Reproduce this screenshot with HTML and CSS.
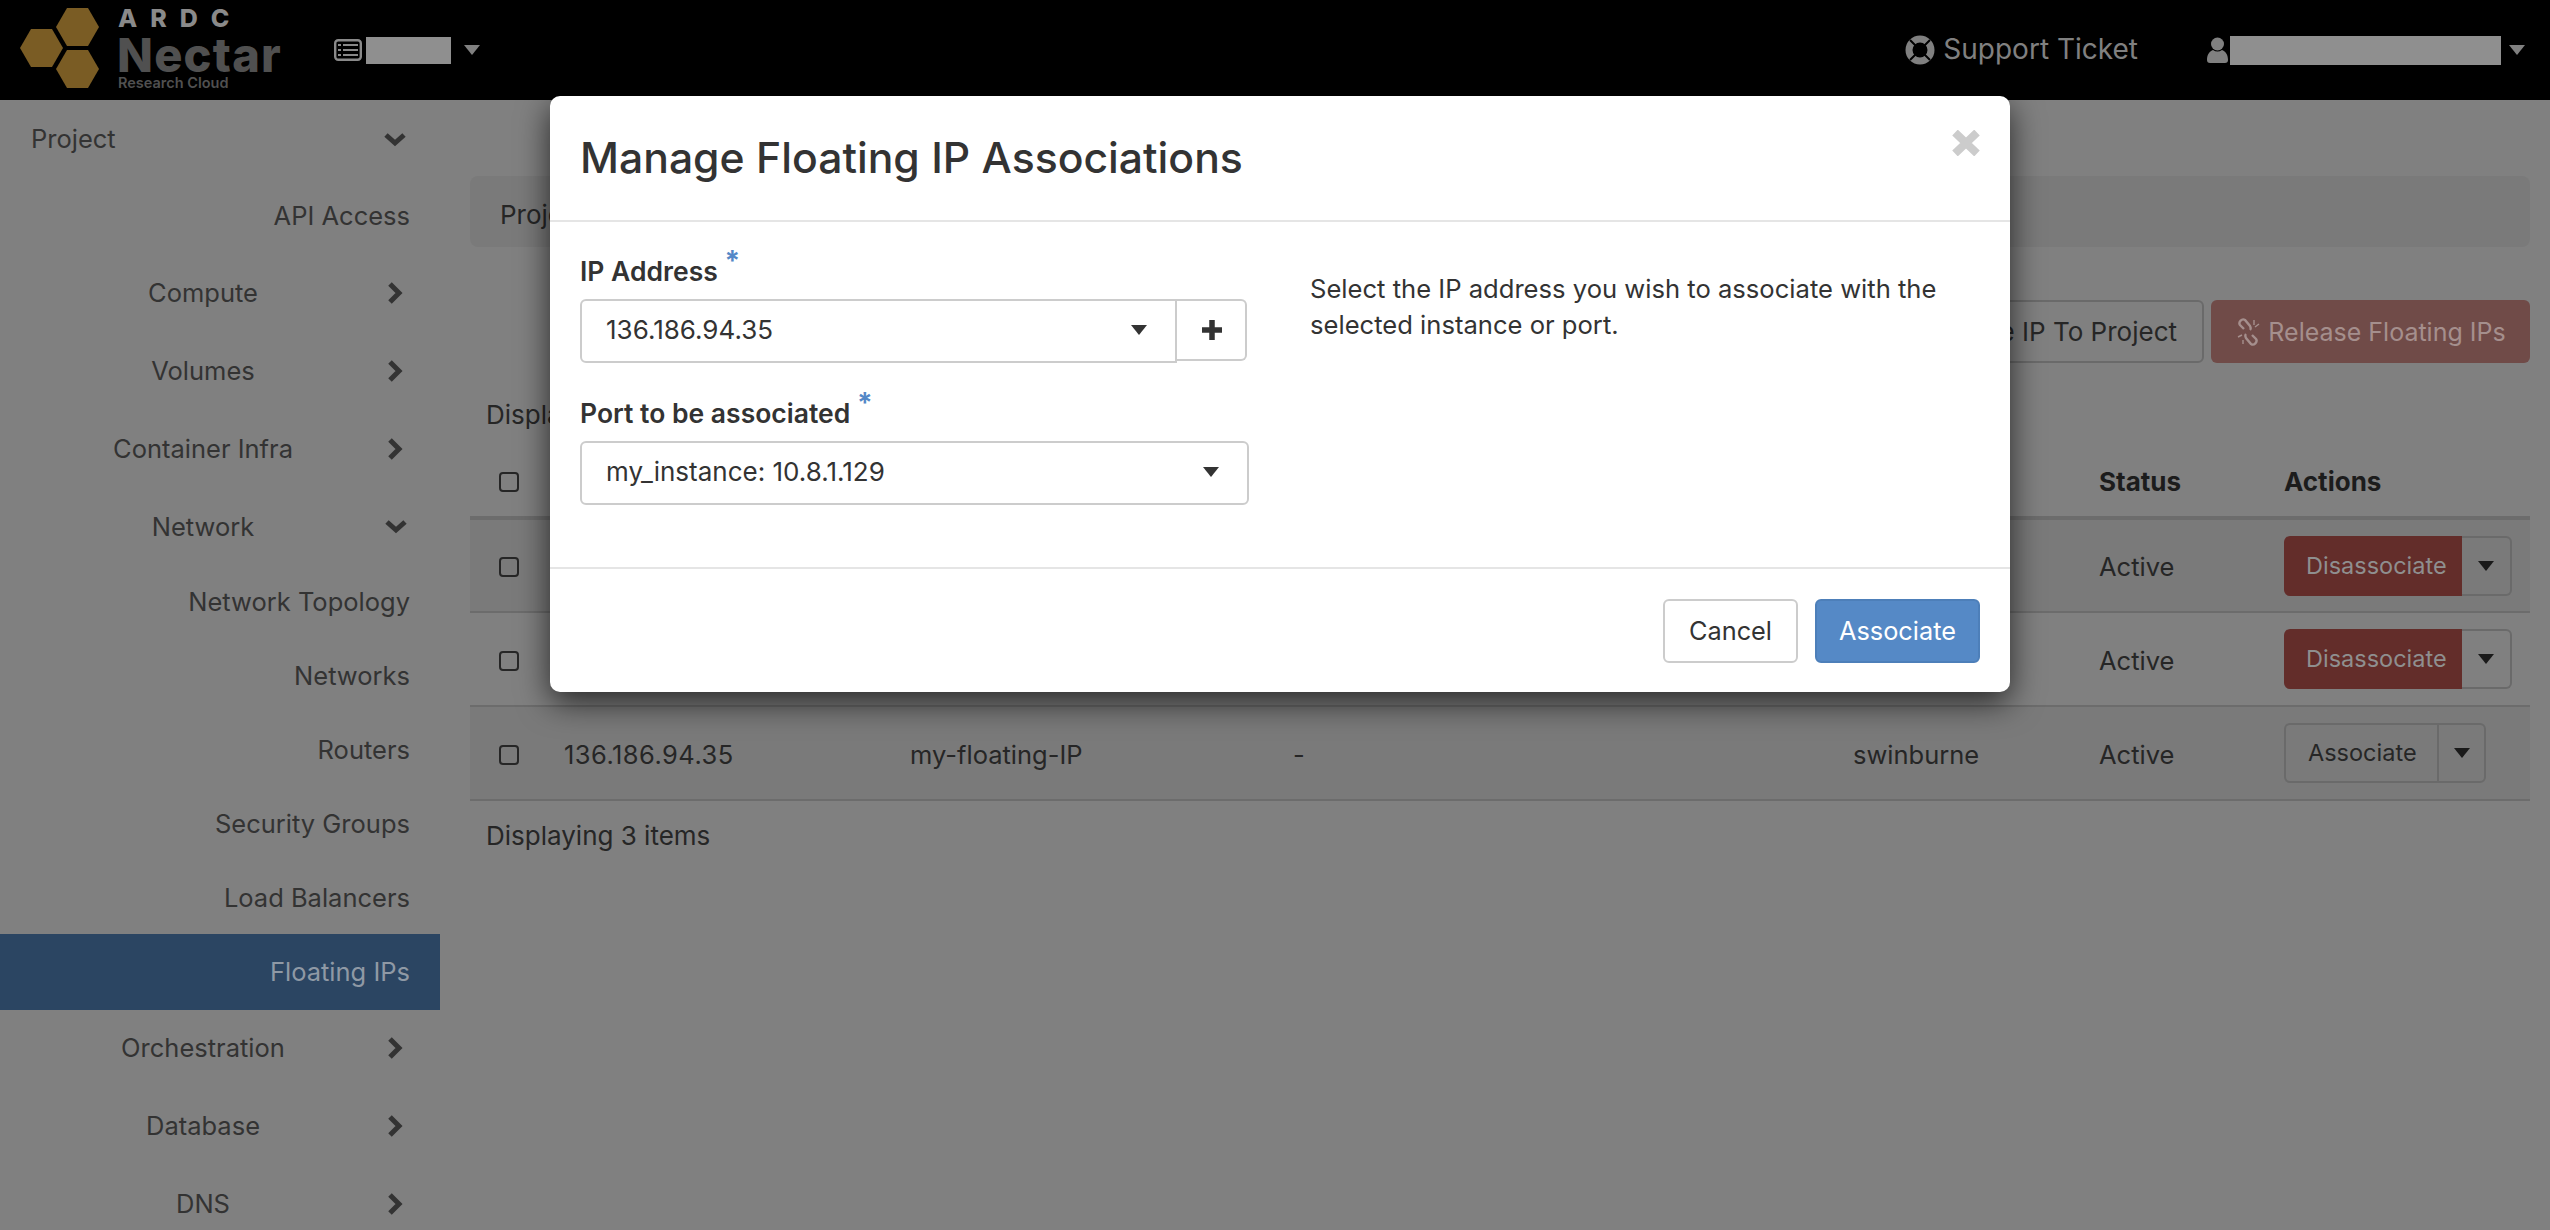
FILE: index.html
```html
<!DOCTYPE html>
<html lang="en">
<head>
    <meta charset="UTF-8">
    <title>Floating IPs</title>
    <link rel="stylesheet" href="styles.css">
</head>
<body>
<svg class="defs" width="0" height="0">
    <symbol id="chev-right" viewBox="0 0 16 24"><path d="M3 3l9 9-9 9" fill="none" stroke="currentColor" stroke-width="5"/></symbol>
    <symbol id="chev-down" viewBox="0 0 24 15"><path d="M3 3l9 8 9-8" fill="none" stroke="currentColor" stroke-width="5"/></symbol>
</svg>

<header class="topbar">
    <svg class="hexes" width="80" height="100" viewBox="0 0 80 100">
        <polygon points="47,8 68,8 79,27 68,46 47,46 36,27"/>
        <polygon points="11,29 32,29 43,48 32,67 11,67 0,48"/>
        <polygon points="47,50 68,50 79,69 68,88 47,88 36,69"/>
    </svg>
    <div class="brand">
        <span class="brand-ardc">ARDC</span>
        <span class="brand-name">Nectar</span>
        <span class="brand-sub">Research Cloud</span>
    </div>
    <div class="project-pick">
        <svg width="28" height="22" viewBox="0 0 28 22"><rect x="1.2" y="1.2" width="25.6" height="19.6" rx="3" fill="none" stroke="#8a8a8a" stroke-width="2.4"/><path d="M4 6h3M9 6h15M4 11h3M9 11h15M4 16h3M9 16h15" stroke="#8a8a8a" stroke-width="2"/></svg>
        <span class="redact redact-project"></span>
        <span class="caret caret-top"></span>
    </div>
    <div class="topbar-right">
        <svg class="ring" width="30" height="30" viewBox="0 0 30 30"><circle cx="15" cy="15" r="11" fill="none" stroke="#808080" stroke-width="7"/><path d="M5 5l6 6M25 5l-6 6M5 25l6-6M25 25l-6-6" stroke="#000" stroke-width="2"/></svg>
        <span class="support">Support Ticket</span>
        <div class="user">
            <svg width="21" height="26" viewBox="0 0 21 26"><circle cx="10.5" cy="7" r="6.5" fill="#808080"/><path d="M0 23c0-6 3-9 6-10 3 2 6 2 9 0 3 1 6 4 6 10 0 2-1 3-3 3H3c-2 0-3-1-3-3z" fill="#808080"/></svg>
            <span class="redact redact-user"></span>
            <span class="caret caret-top"></span>
        </div>
    </div>
</header>

<div class="page">
    <nav class="side">
        <a class="side-project">Project<svg class="chev-d"><use href="#chev-down"/></svg></a>
        <a class="side-sub side-first">API Access</a>
        <a class="side-group"><span>Compute</span><svg class="chev-r"><use href="#chev-right"/></svg></a>
        <a class="side-group"><span>Volumes</span><svg class="chev-r"><use href="#chev-right"/></svg></a>
        <a class="side-group"><span>Container Infra</span><svg class="chev-r"><use href="#chev-right"/></svg></a>
        <a class="side-group side-open"><span>Network</span><svg class="chev-d"><use href="#chev-down"/></svg></a>
        <a class="side-sub">Network Topology</a>
        <a class="side-sub">Networks</a>
        <a class="side-sub">Routers</a>
        <a class="side-sub">Security Groups</a>
        <a class="side-sub">Load Balancers</a>
        <a class="side-sub active">Floating IPs</a>
        <a class="side-group"><span>Orchestration</span><svg class="chev-r"><use href="#chev-right"/></svg></a>
        <a class="side-group"><span>Database</span><svg class="chev-r"><use href="#chev-right"/></svg></a>
        <a class="side-group"><span>DNS</span><svg class="chev-r"><use href="#chev-right"/></svg></a>
    </nav>

    <main class="content">
        <div class="crumb">Project / Network / Floating IPs</div>
        <div class="toolbar">
            <button class="btn btn-ghost">Allocate IP To Project</button>
            <button class="btn btn-release">
                <svg width="26" height="30" viewBox="0 0 26 30" fill="none" stroke="#a58f8d" stroke-width="2.4"><path d="M9 12L5 8c-2-3 2-7 5-5l5 6c1 2 1 3 0 4M17 18l4 4c2 3-2 7-5 5l-5-6c-1-2-1-3 0-4"/><path d="M19 3v5M24 7l-4 3M3 20l4-2M8 27v-4" stroke-width="1.4"/></svg>
                Release Floating IPs
            </button>
        </div>
        <div class="count count-top">Displaying 3 items</div>
        <table class="ips">
            <colgroup>
                <col class="c-check"><col class="c-ip"><col class="c-name"><col class="c-map"><col class="c-pool"><col class="c-status"><col class="c-act">
            </colgroup>
            <thead>
            <tr>
                <th><span class="check"></span></th><th>IP Address</th><th>Description</th><th>Mapped Fixed IP Address</th><th>Pool</th><th>Status</th><th>Actions</th>
            </tr>
            </thead>
            <tbody>
            <tr>
                <td><span class="check"></span></td><td class="ip">103.6.252.10</td><td>-</td><td>-</td><td>swinburne</td><td>Active</td>
                <td class="act"><div class="split"><span class="split-main danger">Disassociate</span><span class="split-caret"><span class="caret"></span></span></div></td>
            </tr>
            <tr>
                <td><span class="check"></span></td><td class="ip">103.6.252.11</td><td>-</td><td>-</td><td>swinburne</td><td>Active</td>
                <td class="act"><div class="split"><span class="split-main danger">Disassociate</span><span class="split-caret"><span class="caret"></span></span></div></td>
            </tr>
            <tr>
                <td><span class="check"></span></td><td class="ip">136.186.94.35</td><td>my-floating-IP</td><td>-</td><td>swinburne</td><td>Active</td>
                <td class="act"><div class="split"><span class="split-main plain">Associate</span><span class="split-caret split-caret-plain"><span class="caret"></span></span></div></td>
            </tr>
            </tbody>
        </table>
        <div class="count">Displaying 3 items</div>
    </main>
</div>

<div class="modal">
    <div class="modal-head">
        <h1>Manage Floating IP Associations</h1>
        <svg class="close" width="28" height="26" viewBox="0 0 28 26"><path d="M3 2.5l22 21M25 2.5l-22 21" stroke="#ccc" stroke-width="8"/></svg>
    </div>
    <div class="modal-body">
        <div class="form-col">
            <label class="lbl">IP Address <span class="req">*</span></label>
            <div class="input-group">
                <div class="sel sel-grouped">136.186.94.35<span class="caret"></span></div>
                <div class="add">
                    <svg width="22" height="22" viewBox="0 0 22 22"><path d="M11 1v20M1 11h20" stroke="#333" stroke-width="5.5"/></svg>
                </div>
            </div>
            <label class="lbl">Port to be associated <span class="req">*</span></label>
            <div class="sel">my_instance: 10.8.1.129<span class="caret"></span></div>
        </div>
        <p class="help">Select the IP address you wish to associate with the selected instance or port.</p>
    </div>
    <div class="modal-foot">
        <button class="btn btn-cancel">Cancel</button>
        <button class="btn btn-primary">Associate</button>
    </div>
</div>
</body>
</html>
```

FILE: styles.css
```css
*{
    margin: 0;
    padding: 0;
    box-sizing: border-box;
}
html,body{
    height: 1230px;
    overflow: hidden;
}
body{
    background-color: #808080;
    color: #262626;
    font-family: Inter, "Liberation Sans", sans-serif;
    font-size: 26px;
    line-height: 36px;
    position: relative;
}
.defs{
    display: block;
}

/* top bar */
.topbar{
    height: 100px;
    background-color: #000;
    display: flex;
    align-items: center;
    padding: 0 25px 0 20px;
    color: #808080;
}
.hexes{
    fill: #7a5c24;
    flex: none;
}
.brand{
    width: 162px;
    height: 100px;
    margin-left: 18px;
    display: flex;
    flex-direction: column;
    color: #505050;
    font-weight: 800;
}
.brand-ardc{
    height: 32px;
    font-size: 25px;
    line-height: 36px;
    letter-spacing: 13px;
    color: #8a8a8a;
}
.brand-name{
    height: 43px;
    font-size: 47px;
    line-height: 46px;
    letter-spacing: 1.2px;
    margin-left: -1px;
}
.brand-sub{
    font-size: 14.5px;
    line-height: 16px;
    font-weight: 600;
}
.project-pick{
    margin-left: 54px;
    display: flex;
    align-items: center;
}
.redact{
    display: block;
    background-color: #8f8f8f;
}
.redact-project{
    width: 85px;
    height: 27px;
    margin-left: 4px;
}
.redact-user{
    width: 271px;
    height: 29px;
    margin-left: 2px;
}
.caret{
    display: inline-block;
    width: 0;
    height: 0;
    border-top: 10px solid #333;
    border-left: 8px solid transparent;
    border-right: 8px solid transparent;
}
.caret-top{
    border-top-color: #808080;
    margin-left: 13px;
}
.user .caret-top{
    margin-left: 8px;
}
.topbar-right{
    margin-left: auto;
    display: flex;
    align-items: center;
}
.support{
    margin-left: 8px;
    margin-bottom: 3px;
    font-size: 28px;
}
.user{
    margin-left: 69px;
    display: flex;
    align-items: center;
}

/* page under the dialog */
.page{
    display: flex;
}
.side{
    width: 440px;
    flex: none;
    display: flex;
    flex-direction: column;
    color: #333;
    font-size: 25.5px;
}
.side a{
    display: flex;
    align-items: center;
}
.side svg{
    flex: none;
}
.side-project{
    height: 78px;
    padding: 0 33px 0 31px;
    justify-content: space-between;
}
.side-group{
    height: 78px;
    padding-left: 31px;
}
.side-open{
    height: 77px;
}
.side-group span{
    flex: none;
    width: 344px;
    text-align: center;
}
.side-sub{
    height: 74px;
    padding-right: 30px;
    justify-content: flex-end;
}
.side-first{
    height: 76px;
}
.side-sub.active{
    height: 76px;
    margin: -1px 0;
    background-color: #2b4562;
    color: #8f99a5;
}
.chev-r{
    width: 16px;
    height: 24px;
    margin-left: 12px;
}
.chev-d{
    width: 24px;
    height: 15px;
}
.side-group .chev-d{
    margin-left: 9px;
}
.content{
    flex: 1;
    padding: 76px 20px 0 30px;
}
.crumb{
    height: 71px;
    padding: 0 30px;
    line-height: 78px;
    background-color: #7a7a7a;
    border-radius: 8px;
}
.toolbar{
    margin-top: 53px;
    display: flex;
    justify-content: flex-end;
    gap: 7px;
}
.btn{
    font: inherit;
    line-height: 36px;
    border-radius: 6px;
    border: 2px solid transparent;
    display: flex;
    align-items: center;
    justify-content: center;
}
.btn-ghost{
    width: 320px;
    height: 63px;
    padding-right: 25px;
    justify-content: flex-end;
    border-color: #6a6a6a;
    background: none;
    color: #262626;
}
.btn-release{
    width: 319px;
    height: 63px;
    gap: 7px;
    background-color: #704b48;
    color: #a58f8d;
    font-size: 25px;
}
.count{
    padding: 17px 16px 0;
}
.count-top{
    padding-top: 34px;
}

/* floating ip table */
.ips{
    width: 2060px;
    margin-top: 15px;
    table-layout: fixed;
    border-collapse: collapse;
}
.c-check{width: 78px;}
.c-ip{width: 346px;}
.c-name{width: 383px;}
.c-map{width: 560px;}
.c-pool{width: 246px;}
.c-status{width: 185px;}
.c-act{width: 262px;}
.ips th,.ips td{
    padding: 0 16px;
    text-align: left;
    vertical-align: middle;
}
.ips th{
    height: 70px;
    font-weight: 700;
    color: #1c1c1c;
    border-bottom: 4px solid #6c6c6c;
}
.ips td{
    height: 94px;
    padding-top: 3px;
    font-size: 25.5px;
    border-bottom: 2px solid #6c6c6c;
}
.ips td.ip{
    letter-spacing: .45px;
}
.ips td.act{
    padding-top: 0;
}
.ips tbody tr:nth-child(odd){
    background-color: #7a7a7a;
}
.ips tbody tr:nth-child(even){
    background-color: #808080;
}
.ips th:first-child,.ips td:first-child{
    padding-left: 29px;
}
.check{
    display: block;
    width: 20px;
    height: 20px;
    border: 2px solid #262626;
    border-radius: 4px;
}
.split{
    display: flex;
    width: max-content;
    height: 60px;
    font-size: 23.5px;
}
.split-main{
    display: flex;
    align-items: center;
    padding: 0 22px;
    border-radius: 6px 0 0 6px;
}
.danger{
    width: 178px;
    background-color: #632d2a;
    color: #8f8f8f;
}
.plain{
    width: 153px;
    border: 2px solid #6a6a6a;
    border-right: 0;
}
.split-caret{
    width: 50px;
    display: flex;
    align-items: center;
    justify-content: center;
    border: 2px solid #6a6a6a;
    border-left: 0;
    border-radius: 0 6px 6px 0;
}
.split-caret-plain{
    width: 49px;
    border-left: 2px solid #6a6a6a;
}
.split .caret{
    border-top-color: #1a1a1a;
}

/* dialog */
.modal{
    position: absolute;
    left: 550px;
    top: 96px;
    width: 1460px;
    height: 596px;
    background-color: #fff;
    color: #333;
    border-radius: 10px;
    box-shadow: 0 10px 32px rgba(0,0,0,.7);
    display: flex;
    flex-direction: column;
}
.modal-head{
    height: 126px;
    flex: none;
    padding: 0 30px;
    display: flex;
    align-items: center;
    justify-content: space-between;
    border-bottom: 2px solid #e5e5e5;
}
.modal-head h1{
    font-size: 42.7px;
    font-weight: 500;
    line-height: 50px;
}
.close{
    margin-bottom: 30px;
}
.modal-body{
    flex: 1;
    padding: 31px 30px 0;
    display: grid;
    grid-template-columns: 670px 1fr;
    column-gap: 60px;
}
.lbl{
    display: block;
    height: 36px;
    margin-bottom: 10px;
    font-weight: 600;
    font-size: 26.5px;
}
.req{
    color: #5488c7;
    font-size: 28px;
    font-weight: 700;
    line-height: 0;
    position: relative;
    top: -10px;
}
.input-group{
    display: flex;
    width: 667px;
    margin-bottom: 32px;
}
.sel{
    height: 64px;
    padding: 0 28px 3px 24px;
    display: flex;
    align-items: center;
    justify-content: space-between;
    border: 2px solid #ccc;
    border-radius: 6px;
    width: 669px;
}
.sel-grouped{
    width: 597px;
    border-radius: 6px 0 0 6px;
    flex: none;
}
.add{
    width: 70px;
    height: 62px;
    flex: none;
    padding-left: 2px;
    display: flex;
    align-items: center;
    justify-content: center;
    border: 2px solid #ccc;
    border-left: 0;
    border-radius: 0 6px 6px 0;
}
.help{
    margin-top: 18px;
    font-size: 25.6px;
}
.modal-foot{
    height: 125px;
    flex: none;
    padding: 30px 30px 0;
    display: flex;
    justify-content: flex-end;
    gap: 17px;
    border-top: 2px solid #e5e5e5;
}
.modal-foot .btn{
    height: 64px;
    font-size: 25.3px;
}
.btn-cancel{
    width: 135px;
    background-color: #fff;
    border-color: #ccc;
    color: #333;
}
.btn-primary{
    width: 165px;
    background-color: #5589c6;
    border-color: #4d7fb9;
    color: #fff;
}
```
